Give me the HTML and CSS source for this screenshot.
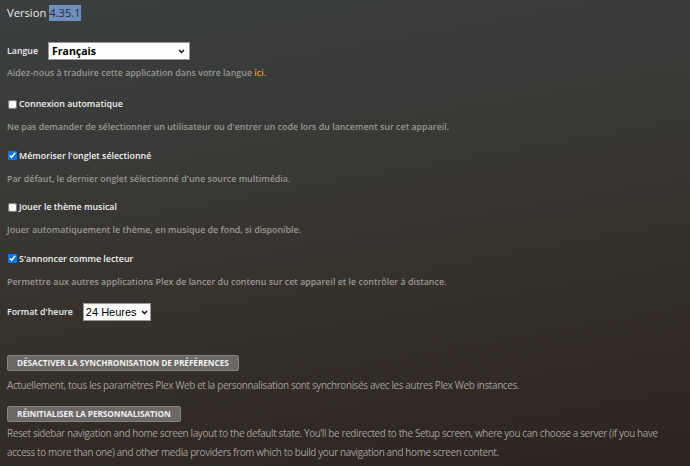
FILE: index.html
```html
<!DOCTYPE html>
<html lang="fr">
<head>
<meta charset="utf-8">
<link rel="stylesheet" href="styles.css">
</head>
<body>
<div class="page">
  <div class="version">Version <span class="sel">4.35.1</span></div>

  <div class="field lang">
    <span class="flabel">Langue</span>
    <span class="selwrap">
      <select class="select select-lang"><option>Français</option></select>
      <svg class="chev" width="7" height="5" viewBox="0 0 7 5"><path d="M1 1 L3.5 3.5 L6 1" fill="none" stroke="#111" stroke-width="1.5"/></svg>
    </span>
  </div>
  <p class="desc">Aidez-nous à traduire cette application dans votre langue <a class="link">ici</a>.</p>

  <div class="check"><input type="checkbox"><span>Connexion automatique</span></div>
  <p class="desc">Ne pas demander de sélectionner un utilisateur ou d'entrer un code lors du lancement sur cet appareil.</p>

  <div class="check"><input type="checkbox" checked><span>Mémoriser l'onglet sélectionné</span></div>
  <p class="desc">Par défaut, le dernier onglet sélectionné d'une source multimédia.</p>

  <div class="check"><input type="checkbox"><span>Jouer le thème musical</span></div>
  <p class="desc">Jouer automatiquement le thème, en musique de fond, si disponible.</p>

  <div class="check"><input type="checkbox" checked><span>S'annoncer comme lecteur</span></div>
  <p class="desc">Permettre aux autres applications Plex de lancer du contenu sur cet appareil et le contrôler à distance.</p>

  <div class="field hour">
    <span class="flabel">Format d'heure</span>
    <span class="selwrap">
      <select class="select select-hour"><option>24 Heures</option></select>
      <svg class="chev" width="7" height="5" viewBox="0 0 7 5"><path d="M1 1 L3.5 3.5 L6 1" fill="none" stroke="#111" stroke-width="1.5"/></svg>
    </span>
  </div>

  <button class="btn btn-sync">Désactiver la synchronisation de préférences</button>
  <p class="desc cond">Actuellement, tous les paramètres Plex Web et la personnalisation sont synchronisés avec les autres Plex Web instances.</p>

  <button class="btn btn-reset">Réinitialiser la personnalisation</button>
  <p class="desc cond wide">Reset sidebar navigation and home screen layout to the default state. You’ll be redirected to the Setup screen, where you can choose a server (if you have access to more than one) and other media providers from which to build your navigation and home screen content.</p>
</div>
</body>
</html>
```

FILE: styles.css
```css
html, body {
  margin: 0;
  height: 100%;
}
body {
  background: linear-gradient(170deg, #3b3f40 0%, #393a37 30%, #37312b 60%, #2b241f 100%);
  font-family: "Open Sans", "DejaVu Sans", sans-serif;
  color: #fff;
  overflow: hidden;
}
.page {
  padding: 4px 7px 0 7px;
}
.version {
  font-size: 11.2px;
  line-height: 17px;
  color: #eee;
}
.sel {
  background: #6f8fbf;
  color: #2a2d33;
  padding: 0 0 1px 0;
}
.field {
  display: flex;
  align-items: center;
  height: 18px;
}
.lang {
  margin-top: 21px;
  gap: 10px;
}
.flabel {
  font-size: 8.8px;
  font-weight: 600;
  color: #eee;
}
.selwrap {
  position: relative;
  display: inline-flex;
}
.select {
  appearance: none;
  -webkit-appearance: none;
  background: #fff;
  color: #000;
  border: 1px solid #999;
  border-radius: 0;
  height: 18px;
  margin: 0;
  outline: none;
}
.chev {
  position: absolute;
  top: 7px;
  pointer-events: none;
}
.select-lang {
  width: 142px;
  padding: 0 3px;
  font-family: "Open Sans", sans-serif;
  font-size: 10.5px;
  font-weight: 700;
}
.lang .chev {
  right: 5px;
}
.select-hour {
  width: 68px;
  padding: 0 2px;
  font-family: "Liberation Sans", Arial, sans-serif;
  font-size: 11px;
}
.hour .chev {
  right: 3px;
}
.desc {
  margin: 0;
  font-size: 8.9px;
  line-height: 14px;
  color: #9a9895;
  font-weight: 600;
}
.lang + .desc {
  margin-top: 6px;
}
.link {
  color: #e5a00d;
}
.check {
  display: flex;
  align-items: center;
  margin-top: 14.5px;
  font-size: 8.9px;
  font-weight: 600;
  color: #f2f2f2;
  line-height: 14px;
}
.lang + .desc + .check {
  margin-top: 17px;
}
.check input {
  margin: 0 2px 0 1px;
  width: 9px;
  height: 9px;
}
.check + .desc {
  margin-top: 9px;
}
.hour {
  margin-top: 14px;
  gap: 10px;
}
.btn {
  display: block;
  background: #6b6865;
  border: 1px solid #86837f;
  border-radius: 2px;
  color: #f0f0f0;
  font-family: "Open Sans", sans-serif;
  font-size: 8.3px;
  font-weight: 700;
  letter-spacing: -0.1px;
  text-transform: uppercase;
  white-space: nowrap;
  height: 16px;
  padding: 0 9px;
  line-height: 14px;
}
.btn-sync {
  margin-top: 34px;
}
.btn-reset {
  margin-top: 14px;
}
.btn-sync + .desc {
  margin-top: 7px;
}
.cond {
  font-size: 9.9px;
  font-weight: 400;
  letter-spacing: -0.35px;
  color: #a29f9b;
}
.wide {
  margin-top: 2px;
  line-height: 19px;
}
```
